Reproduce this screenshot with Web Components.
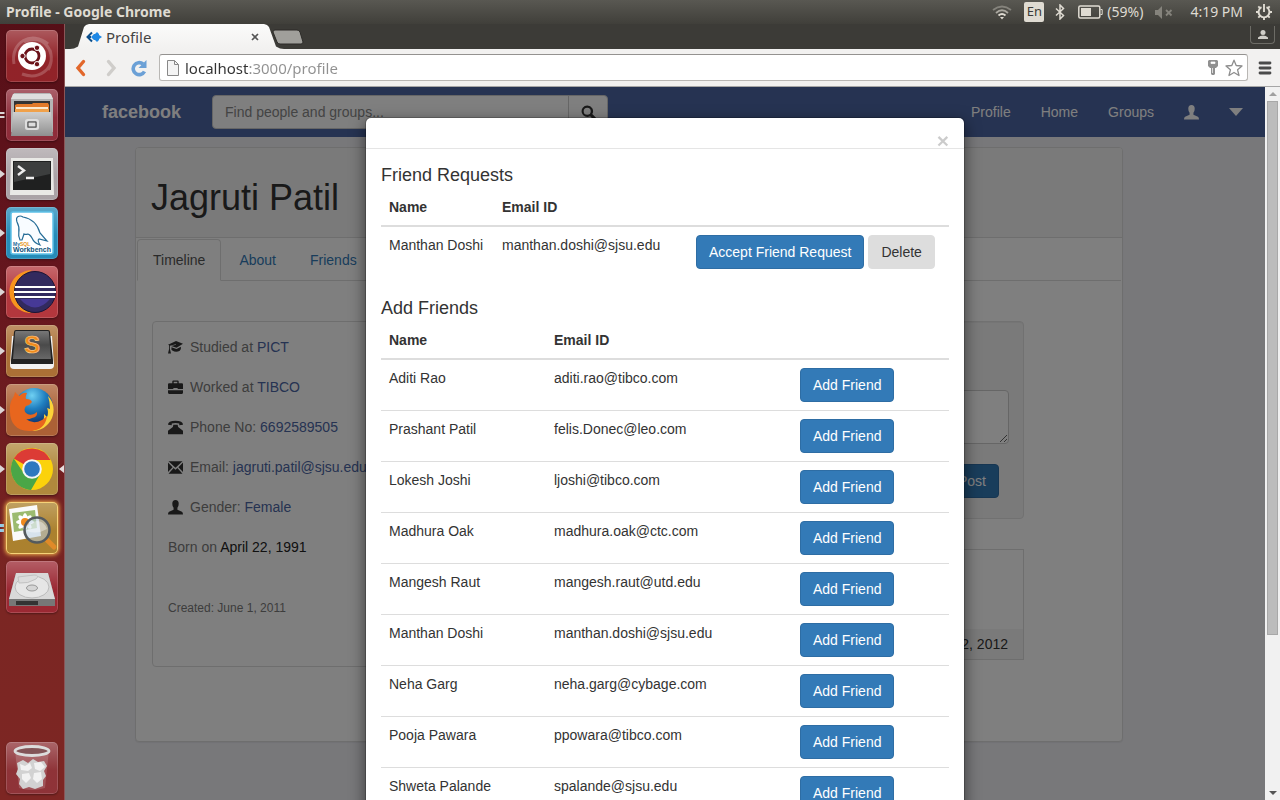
<!DOCTYPE html>
<html lang="en">
<head>
<meta charset="utf-8">
<title>Profile</title>
<style>
  html, body { margin: 0; height: 100%; }
  body { display: flex; flex-direction: column; overflow: hidden; background: #3c3b37; font: 14px/20px "Liberation Sans", Arial, sans-serif; color: #333; }
  .desktop { flex: 1; display: flex; min-height: 0; }
  browser-window { flex: 1; min-width: 0; }
</style>
</head>
<body>
<system-panel></system-panel>
<div class="desktop">
  <app-launcher></app-launcher>
  <browser-window>
    <profile-page></profile-page>
    <modal-dialog slot="overlay">
      <friend-table kind="requests"></friend-table>
      <friend-table kind="suggestions"></friend-table>
    </modal-dialog>
  </browser-window>
</div>
<script>
function define(name, html, init) {
  const template = document.createElement('template');
  template.innerHTML = html;
  customElements.define(name, class extends HTMLElement {
    constructor() {
      super();
      this.attachShadow({ mode: 'open' }).append(template.content.cloneNode(true));
    }
    connectedCallback() { if (init) init.call(this, this.shadowRoot); }
  });
}

/* Desktop panel along the top of the screen */
define('system-panel', `
<style>
  :host { display: flex; align-items: center; justify-content: space-between; height: 24px; padding: 0 8px 0 6px; background: linear-gradient(#595852, #403f3a); color: #dfdbd2; font: 14px/24px "Noto Sans", sans-serif; }
  b { font-weight: 700; }
  .tray { display: flex; align-items: center; }
  .tray > * { display: block; }
  .wifi { margin-right: 12px; }
  .lang { width: 20px; height: 20px; margin-right: 11px; border-radius: 2px; background: #dfdbd2; color: #3c3b37; font-size: 13px; line-height: 19px; text-align: center; }
  .bt { margin-right: 13px; }
  .bat { margin-right: 4px; }
  .vol { margin: 0 17px 0 12px; }
  .clock { margin-right: 13px; }
</style>
<b>Profile - Google Chrome</b>
<div class="tray">
  <svg class="wifi" width="20" height="16" viewBox="0 0 20 16" fill="none" stroke-width="1.800"><path d="M1 6Q10-1 19 6" stroke="#85837c"/><path d="M4 9Q10 3.500 16 9" stroke="#aaa79f"/><path d="M6.500 11.500Q10 8.500 13.500 11.500" stroke="#dfdbd2"/><path d="M8 13L10 15.500 12 13Z" fill="#dfdbd2"/></svg>
  <span class="lang">En</span>
  <svg class="bt" width="10" height="16" viewBox="0 0 10 16" fill="none" stroke="#dfdbd2" stroke-width="1.500"><path d="M1 4.500L8.500 11.500 5 15V1L8.500 4.500 1 11.500"/></svg>
  <svg class="bat" width="25" height="14" viewBox="0 0 25 14"><rect x=".8" y="1" width="21" height="12" rx="1.500" fill="none" stroke="#dfdbd2" stroke-width="1.500"/><path d="M3 3h10v8H3z" fill="#dfdbd2"/><path d="M22.500 4.500h1.700v5h-1.700" fill="none" stroke="#dfdbd2"/></svg>
  <span>(59%)</span>
  <svg class="vol" width="18" height="13" viewBox="0 0 18 13"><path d="M0 4h3l4-4v13l-4-4H0z" fill="#85837c"/><path d="M11 4l5.500 5.500M16.500 4L11 9.500" stroke="#85837c" stroke-width="1.800"/></svg>
  <span class="clock">4:19 PM</span>
  <svg width="16" height="16" viewBox="0 0 16 16" fill="none" stroke="#dfdbd2" stroke-width="1.900"><path d="M5.500 3.200A5.400 5.400 0 1 0 10.500 3.200"/><path d="M8 0v8M0 8h3M13 8h3M8 13v3M2.300 2.300l2 2M13.700 2.300l-2 2M2.300 13.700l2-2M13.700 13.700l-2-2"/></svg>
</div>`);

/* Launcher: column of app tiles; "marks" says which running pips stand beside a tile */
define('launcher-item', `
<style>
  :host { display: grid; grid-template-columns: 6px 52px 6px; align-items: center; height: 52px; }
  .tile { display: block; width: 52px; height: 52px; border-radius: 5px; background: linear-gradient(rgba(255,255,255,.28), rgba(255,255,255,.04) 55%), var(--tile, #a33); box-shadow: inset 0 0 0 1px rgba(255,255,255,.16), 0 1px 2px rgba(0,0,0,.35); }
  :host([focused]) .tile { box-shadow: inset 0 0 0 1px #f6d278, 0 0 4px 1px #f0b04a; }
  ::slotted(svg) { display: block; }
</style>
<svg class="left" width="6" height="10" viewBox="0 0 6 10"></svg>
<span class="tile"><slot></slot></span>
<svg class="right" width="6" height="10" viewBox="0 0 6 10"></svg>`, function (root) {
  const marks = { one: '<path d="M0 1v8L5 5z" fill="#dcd6d6"/>', two: '<path d="M0 2h4l1 1-1 1H0zM0 6h4l1 1-1 1H0z" fill="#dcd6d6"/>', blue: '<path d="M0 1h4v3H0zM0 6h4v3H0z" fill="#8fcdf0"/>' };
  root.querySelector('.left').innerHTML = marks[this.getAttribute('marks')] || '';
  if (this.hasAttribute('current')) root.querySelector('.right').innerHTML = '<path d="M6 1v8L1 5z" fill="#e6dede"/>';
});

define('app-launcher', `
<style>
  :host { display: flex; flex-direction: column; gap: 7px; box-sizing: border-box; width: 65px; padding: 6px 0; background: linear-gradient(#560f17, #64151d 30%, #7b2623 75%, #7d2623); border-right: 1px solid #8b5557; font-family: "Liberation Sans", sans-serif; }
  .trash { margin-top: auto; }
</style>
<launcher-item style="--tile:#8d1a20"><svg width="52" height="52" viewBox="0 0 52 52"><path d="M8 34C4 12 26 0 42 14M44 20C50 40 32 50 16 44M18 12C38 2 52 24 42 40" fill="none" stroke="#fff" stroke-opacity=".2" stroke-width="3"/><circle cx="26" cy="26" r="14" fill="#fff"/><circle cx="26" cy="26" r="7" fill="none" stroke="#6b1219" stroke-width="2.800"/><g fill="#6b1219" stroke="#fff"><circle cx="16.500" cy="26" r="2.700"/><circle cx="31" cy="17.800" r="2.700"/><circle cx="31" cy="34.200" r="2.700"/></g></svg></launcher-item>
<launcher-item marks="two" style="--tile:#8a2432"><svg width="52" height="52" viewBox="0 0 52 52"><defs><linearGradient id="steel" x2="0" y2="1"><stop stop-color="#cfcfcf"/><stop offset="1" stop-color="#8f8f8f"/></linearGradient></defs><path d="M8 4h36l3 6v33H5V10z" fill="#b5b5b5"/><path d="M7 5h38l2 5H5z" fill="#dedede"/><path d="M8 12h36v12H8z" fill="#333"/><path d="M9 16l2-1h15l1-1h15l1 2v8H9z" fill="#e27a2a"/><path d="M10 18h32v5H10z" fill="#fbe9cf"/><path d="M9 20h34v4H9z" fill="#f0a14a"/><path d="M7 23h38l2 24H5z" fill="url(#steel)"/><rect x="20" y="31" width="12" height="9" rx="1.500" fill="none" stroke="#dedede" stroke-width="2"/><path d="M22 33h8v5h-8z" fill="#ddd" stroke="#444"/></svg></launcher-item>
<launcher-item marks="one" style="--tile:#a79fa3"><svg width="52" height="52" viewBox="0 0 52 52"><path d="M5 10h42l1 37H4z" fill="#e9e9e6"/><path d="M7 13h38v29H7z" fill="#1f2020"/><path d="M8 14h36v12L8 34z" fill="#3c3e3e"/><path d="M12 18l6 4.500-6 4.500M20 30h8" fill="none" stroke="#eee" stroke-width="2.400"/></svg></launcher-item>
<launcher-item marks="one" style="--tile:#1d87b5"><svg width="52" height="52" viewBox="0 0 52 52"><rect x="5" y="5" width="42" height="42" rx="2" fill="#fff" stroke="#5fc1e8" stroke-width="1.500"/><path d="M14 33C10 26 16 24 11 15 9 9 14 8 17 10 28 12 32 19 34 26L41 34 33 32Q31 33 34 38 28 36 26 31C22 24 21 29 18 27L16 33z" fill="#f8fcff" stroke="#256c96" stroke-width="1.200"/><text x="7" y="39" font-size="5" font-weight="700" fill="#1b6c9a">My<tspan fill="#e8941a">SQL</tspan></text><text x="7" y="45" font-size="7" font-weight="700" fill="#0b5078">Workbench</text></svg></launcher-item>
<launcher-item marks="one" style="--tile:#b02f35"><svg width="52" height="52" viewBox="0 0 52 52"><path d="M26 4C-4 6-4 46 26 47 8 40 8 12 26 4z" fill="#f7941e"/><circle cx="29" cy="26" r="20.500" fill="#322a5e" stroke="#191433"/><path d="M14 33Q29 50 44 33z" fill="#463996"/><path d="M9 21h40M8 26h42M9 31h40" stroke="#fff" stroke-width="2.200"/></svg></launcher-item>
<launcher-item marks="one" style="--tile:#a86a2e"><svg width="52" height="52" viewBox="0 0 52 52"><defs><linearGradient id="cap" x2="0" y2="1"><stop stop-color="#777"/><stop offset=".5" stop-color="#4a4a4a"/><stop offset="1" stop-color="#686868"/></linearGradient></defs><path d="M6 11L4 40q0 4 4 4h36q4 0 4-4l-2-29z" fill="#f2f2f2"/><path d="M10 5h32q2 0 2 2l3 28v4H5v-4L8 7q0-2 2-2z" fill="#222"/><path d="M10 6h32q1 0 1 2l2 26H7L9 8q0-2 1-2z" fill="url(#cap)"/><text x="18" y="28" font-size="24" font-weight="700" fill="#f08a1c" stroke="#ffd08a" stroke-width=".6">S</text></svg></launcher-item>
<launcher-item marks="one" style="--tile:#a95b2e"><svg width="52" height="52" viewBox="0 0 52 52"><defs><radialGradient id="globe" cx=".45" cy=".2" r=".7"><stop stop-color="#6fd0f2"/><stop offset=".5" stop-color="#1f7fc0"/><stop offset="1" stop-color="#123c78"/></radialGradient></defs><circle cx="28" cy="23" r="19" fill="url(#globe)"/><path d="M42 12c6 6 7 15 4 22-4 9-12 13-20 13 8-4 13-10 12-17l3 3q2-5 0-9l3 1q0-7-2-13z" fill="#fbd238"/><path d="M4 28C3 20 6 15 8 12l1-4 4 4q4-4 8-3-2 4-1 6 5 0 6 3-2 3-6 4-3 4 0 7 3 3 8 1l3-2q1 5-5 6-4 2-6 1 7 6 16 1 2-1 5-4-2 15-18 15C10 47 4 38 4 28z" fill="#e8661e"/></svg></launcher-item>
<launcher-item marks="one" current style="--tile:#ad8435"><svg width="52" height="52" viewBox="0 0 52 52"><circle cx="26" cy="26" r="21" fill="#fbd20b"/><path d="M26 26L7.800 15.500A21 21 0 0 1 44.500 17H26z" fill="#dc3b35"/><path d="M7.800 15.500A21 21 0 0 0 25 47L34.500 30.500 17 29z" fill="#4aa647"/><circle cx="26" cy="26" r="9.800" fill="#f5f5f5"/><circle cx="26" cy="26" r="7.800" fill="#2d78bf"/></svg></launcher-item>
<launcher-item marks="blue" focused style="--tile:#a87c26"><svg width="52" height="52" viewBox="0 0 52 52"><path d="M3 7l28-4 4 31-28 5z" fill="#fafafa"/><path d="M6 11l23-3 2 18-23 4z" fill="#9cbb70"/><g fill="#fff"><ellipse cx="19" cy="20" rx="9" ry="3"/><ellipse cx="19" cy="20" rx="3" ry="9"/><ellipse cx="19" cy="20" rx="9" ry="3" transform="rotate(45 19 20)"/><ellipse cx="19" cy="20" rx="9" ry="3" transform="rotate(-45 19 20)"/></g><circle cx="19" cy="20" r="4" fill="#ee8a1d"/><path d="M41 38l7 7" stroke="#e08a28" stroke-width="5" stroke-linecap="round"/><circle cx="31" cy="28" r="12.500" fill="#b9cfe2" fill-opacity=".55" stroke="#545a5e" stroke-width="2.600"/><path d="M21 29q10 4 20-2-3-8-10-8-8 0-10 10z" fill="#fff" opacity=".4"/></svg></launcher-item>
<launcher-item style="--tile:#97202b"><svg width="52" height="52" viewBox="0 0 52 52"><path d="M10 12h32l7 26v7H3v-7z" fill="#777"/><path d="M10 12h32l7 26H3z" fill="#d9d9d9"/><ellipse cx="26" cy="26" rx="17" ry="11" fill="#e6e6e6" stroke="#bbb"/><path d="M12 16l16-2q6 0 2 4-8 5-17 4z" fill="#dcdcdc" stroke="#c2c2c2"/><ellipse cx="26" cy="27" rx="5.500" ry="3" fill="#d5d5d5" stroke="#999"/><path d="M10 40h22v4H10z" fill="#333"/></svg></launcher-item>
<launcher-item class="trash" style="--tile:#8a2b30"><svg width="52" height="52" viewBox="0 0 52 52"><path d="M9 8h34l-4 38q-13 4-26 0z" fill="#fff" fill-opacity=".16"/><path d="M11 21l6-3 5 3 5-4 5 3 6-1 3 5-3 5 2 5-3 4v6l-8 3-6-2-6 2-4-5 1-5-4-5 2-5z" fill="#d2d2d2"/><path d="M14 22l5 2 5-3 2 5-4 3-7-1zM28 21l7-1 4 5-5 4-5-2zM16 32l7-1 2 5-5 5-4-4zM28 31l7-1 1 7-5 4-4-4z" fill="#f2f2f2"/><ellipse cx="26" cy="9" rx="17" ry="4.500" fill="#835457" stroke="#dcdcdc" stroke-width="2.800"/></svg></launcher-item>`);

/* Browser chrome round the page */
define('browser-window', `
<style>
  :host { display: flex; flex-direction: column; }
  .tabs { display: flex; height: 25px; background: #3c3b37; font: 15px/24px "Noto Sans", sans-serif; }
  .tab { box-sizing: border-box; display: flex; align-items: center; flex: none; width: 214px; height: 25px; padding: 0 25px 0 16px; background: linear-gradient(#fbfbfa, #f2f1f0); clip-path: polygon(0 100%, 4px 98%, 8px 90%, 14px 12%, 16px 4%, 19px 0, 194px 0, 197px 4%, 199px 12%, 206px 90%, 210px 98%, 100% 100%); color: #444; margin-left: 5px; }
  .tab .name { margin: 0 auto 0 4px; }
  .tab button { padding: 0; border: 0; background: none; display: flex; }
  .newtab { padding: 0; border: 0; background: none; display: flex; margin: 5px auto 0 -12px; height: 16px; }
  .person { box-sizing: border-box; width: 25px; height: 18px; margin: 2px 5px 0 0; padding: 0; border: 1px solid #6d6c66; border-top: 0; border-radius: 0 0 4px 4px; background: #3c3b37; display: flex; justify-content: center; align-items: center; }
  .tools { box-sizing: border-box; display: flex; align-items: center; height: 38px; padding: 0 8px 0 10px; background: #f2f1f0; border-bottom: 1px solid #a6a6a6; }
  .tools button { padding: 0; border: 0; background: none; display: flex; flex: none; }
  .back { margin-right: 18px; } .fwd { margin-right: 13px; } .reload { margin-right: 11px; }
  .omni { box-sizing: border-box; display: flex; align-items: center; flex: 1; height: 27px; padding: 0 4px 0 7px; border: 1px solid #b9b7b4; border-top-color: #949290; border-radius: 3px; background: #fff; margin-right: 10px; }
  .omni input { flex: 1; min-width: 0; height: 24px; padding: 0; margin: 0 0 0 6px; border: 0; outline: 0; font: 15px/24px "Noto Sans", sans-serif; background: linear-gradient(90deg, #333 64px, #909090 64px); -webkit-background-clip: text; background-clip: text; color: transparent; }
  .omni .key { margin-right: 7px; }
  .main { flex: 1; display: flex; min-height: 0; }
  .view { flex: 1; min-width: 0; position: relative; overflow: hidden; background: #f0f0f5; }
  .veil { position: absolute; inset: 0; background: rgba(0,0,0,.5); display: flex; justify-content: center; align-items: flex-start; overflow: hidden; }
  .bar { width: 15px; flex: none; display: flex; flex-direction: column; align-items: center; background: #f1f1f1; }
  .bar svg { flex: none; margin: 5px 0; }
  .track { flex: 1; width: 11px; }
  .thumb { box-sizing: border-box; height: 78%; background: #bcbcbc; border: 1px solid #a8a8a8; }
</style>
<div class="tabs">
  <div class="tab">
    <svg width="16" height="12" viewBox="0 0 16 12"><path d="M6 1.500L1.500 6 6 10.500M1 6h4" fill="none" stroke="#0d4f8b" stroke-width="2"/><path d="M5 6l3-3h1l2-2 2 2v1l3 2-3 2v1l-2 2-2-2H8z" fill="#1e88e5"/></svg>
    <span class="name">Profile</span>
    <button aria-label="Close tab"><svg width="8" height="8" viewBox="0 0 8 8" stroke="#555" stroke-width="1.700"><path d="M1 1l6 6M7 1L1 7"/></svg></button>
  </div>
  <button class="newtab" aria-label="New tab"><svg width="32" height="16" viewBox="0 0 32 16"><path d="M3 1h22q2 0 3 2l3 10q0 2-2 2H8q-2 0-3-2L1 3q0-2 2-2z" fill="#a09f9b" stroke="#2c2b28"/></svg></button>
  <button class="person" aria-label="User"><svg width="10" height="9" viewBox="0 0 10 9" fill="#d0cec8"><circle cx="5" cy="2.500" r="2.500"/><path d="M0 9V7.500Q2 5.500 5 5.500t5 2V9z"/></svg></button>
</div>
<div class="tools">
  <button class="back" aria-label="Back"><svg width="12" height="18" viewBox="0 0 12 18"><path d="M8.500 2.500L3 9l5.500 6.500" fill="none" stroke="#e2672b" stroke-width="3.400" stroke-linecap="round"/></svg></button>
  <button class="fwd" aria-label="Forward"><svg width="12" height="18" viewBox="0 0 12 18"><path d="M3.500 2.500L9 9l-5.500 6.500" fill="none" stroke="#cfcdca" stroke-width="3.400" stroke-linecap="round"/></svg></button>
  <button class="reload" aria-label="Reload"><svg width="18" height="18" viewBox="0 0 18 18"><path d="M13 5A6 6 0 1 0 14.500 12.500" fill="none" stroke="#6ba0d6" stroke-width="3.600"/><path d="M16.500 1v8H8.500z" fill="#6ba0d6"/></svg></button>
  <div class="omni">
    <svg width="12" height="16" viewBox="0 0 12 16"><path d="M.5 .5h7l4 4v11H.5z" fill="#f4f4f4" stroke="#888"/><path d="M7.500 .5v4h4" fill="none" stroke="#888"/></svg>
    <input type="text" aria-label="Address" value="localhost:3000/profile">
    <svg class="key" width="10" height="15" viewBox="0 0 10 15"><path d="M1 0h8l1 1v5L8 8H7v6l-1 1H4l-1-1V8H2L0 6V1z" fill="#909090"/><path d="M3 2h4v1.500H3zM4.500 8v5" fill="#fff" stroke="#fff" stroke-width=".7"/></svg>
    <svg width="18" height="18" viewBox="0 0 18 18"><path d="M9 1.200l2.200 5.300 5.800.5-4.400 3.800 1.400 5.700L9 13.500l-5 3 1.400-5.700L1 7l5.800-.5z" fill="#fff" stroke="#8d8d8d" stroke-width="1.300" stroke-linejoin="round"/></svg>
  </div>
  <button aria-label="Menu"><svg width="14" height="14" viewBox="0 0 14 14" stroke="#4a4a4a" stroke-width="2.800" stroke-linecap="round"><path d="M2 2h10M2 7h10M2 12h10"/></svg></button>
</div>
<div class="main">
  <div class="view"><slot></slot><div class="veil"><slot name="overlay"></slot></div></div>
  <div class="bar">
    <svg width="8" height="4" viewBox="0 0 8 4"><path d="M0 4l4-4 4 4z" fill="#a0a0a0"/></svg>
    <div class="track"><div class="thumb"></div></div>
    <svg width="8" height="4" viewBox="0 0 8 4"><path d="M0 0l4 4 4-4z" fill="#555"/></svg>
  </div>
</div>`);

define('glyph-icon', `<style>:host { display: inline-block; width: 15px; height: 15px; } svg { display: block; width: 100%; height: 100%; }</style><svg viewBox="0 0 14 14" fill="currentColor"></svg>`, function (root) {
  const shapes = {
    education: '<path d="M0 4.500L7.500 1 14 3.500 8 7.200 3 5.600 7.500 4.500 7.300 4 1.800 5.400V8.500L2.800 12.500H0L1 8.500V5z"/><path d="M3.200 6.800L8 8.500 12 6.200V8.500L11 10Q7.500 12 4 9.800L3.200 9z"/>',
    briefcase: '<path d="M4 3V1.500Q4 .5 5 .5h4q1 0 1 1V3h3q1 0 1 1v4.500H9V7.500H5v1H0V4q0-1 1-1zM5.300 3h3.400V1.700H5.300zM0 9.500h14V12q0 1-1 1H1q-1 0-1-1z" fill-rule="evenodd"/>',
    phone: '<path d="M0 4.500Q0 .8 7 .8t7 3.700L10.500 5V3.300Q7 2.300 3.500 3.300V5z"/><path d="M5 4.500h4l.5 2L14 10v3.200H0V10l4.500-3.500z"/>',
    envelope: '<path d="M.5 1.200h13L7 7.200zM0 2.400l4.300 4.300L0 11.200zM14 2.400L9.700 6.700 14 11.200zM5.200 7.500L7 9.100l1.800-1.600 4.700 5.300H.5z"/>',
    user: '<path d="M7 0q3 0 3 3.500Q10 6 8.800 7.200V9L13 11q1 .5 1 2.500H0Q0 11.500 1 11L5.200 9V7.200Q4 6 4 3.500 4 0 7 0z"/>',
    search: '<path d="M5.800.5a5.300 5.300 0 1 0 2.700 9.900L12 14l2-2-3.500-3.500A5.300 5.300 0 0 0 5.800.5zm0 2a3.300 3.300 0 1 1 0 6.600 3.300 3.300 0 0 1 0-6.600z"/>'
  };
  root.querySelector('svg').innerHTML = shapes[this.getAttribute('name')];
});

define('site-navbar', `
<style>
  :host { display: flex; align-items: center; height: 50px; padding: 0 22px 0 37px; background: #4c66a4; }
  a { color: #fff; text-decoration: none; }
  .brand { font-size: 18px; font-weight: 700; margin-right: 31px; }
  form { display: flex; width: 396px; margin: 0; }
  input, form button { box-sizing: border-box; height: 34px; border: 1px solid #ccc; background: #fff; font: inherit; }
  input { flex: 1; min-width: 0; padding: 6px 12px; border-radius: 4px 0 0 4px; }
  input::placeholder { color: #888; opacity: 1; }
  form button { width: 40px; margin-left: -1px; padding: 0; border-radius: 0 4px 4px 0; color: #333; display: flex; align-items: center; justify-content: center; }
  nav { display: flex; align-items: center; gap: 30px; margin-left: auto; }
  nav a { display: flex; }
</style>
<a class="brand" href="#">facebook</a>
<form><input type="text" aria-label="Search" placeholder="Find people and groups..."><button type="button" aria-label="Search"><glyph-icon name="search"></glyph-icon></button></form>
<nav><a href="#">Profile</a><a href="#">Home</a><a href="#">Groups</a><a href="#" aria-label="Account"><glyph-icon name="user"></glyph-icon></a><a href="#" aria-label="More"><svg width="14" height="8" viewBox="0 0 14 8"><path d="M0 0h14L7 8z" fill="#fff"/></svg></a></nav>`);

define('profile-page', `
<style>
  :host { display: block; }
  .card { box-sizing: border-box; margin: 10px 142px 0 70px; min-height: 595px; background: #fff; border: 1px solid #ddd; border-radius: 4px; box-shadow: 0 1px 1px rgba(0,0,0,.05); }
  header { box-sizing: border-box; height: 90px; padding: 30px 15px 0; background: #f5f5f5; border-bottom: 1px solid #ddd; border-radius: 3px 3px 0 0; }
  h1 { margin: 0; font-size: 36px; line-height: 40px; font-weight: 500; }
  .tabs { display: flex; gap: 2px; margin: 1px 1px 0; border-bottom: 1px solid #ddd; }
  .tabs a { padding: 10px 15px; border: 1px solid transparent; margin-bottom: -1px; border-radius: 4px 4px 0 0; color: #337ab7; text-decoration: none; }
  .tabs a.on { color: #555; background: #fff; border-color: #ddd #ddd #fff; }
  .cols { display: grid; grid-template-columns: 1fr 2fr; gap: 16px; align-items: start; margin: 40px 98px 0 16px; }
  .about { box-sizing: border-box; min-height: 346px; padding: 15px; border: 1px solid #ddd; border-radius: 4px; display: flex; flex-direction: column; gap: 20px; color: #7a7a7a; }
  .about div { display: flex; align-items: center; gap: 7px; white-space: nowrap; }
  .about glyph-icon { color: #333; }
  .about a { color: #4c66a4; text-decoration: none; }
  .about b { font-weight: 400; color: #222; }
  small { font-size: 12px; margin-top: 21px; }
  .side { display: flex; flex-direction: column; gap: 30px; }
  .well { display: flex; flex-direction: column; align-items: flex-end; gap: 20px; padding: 68px 14px 20px; background: #f5f5f5; border: 1px solid #e3e3e3; border-radius: 4px; box-shadow: inset 0 1px 1px rgba(0,0,0,.05); }
  textarea { box-sizing: border-box; display: block; width: 100%; height: 54px; border: 1px solid #ccc; border-radius: 4px; background: #fff; }
  .well button { height: 34px; margin-right: 10px; padding: 0 12px; border: 1px solid #2e6da4; border-radius: 4px; background: #337ab7; color: #fff; font: inherit; }
  .post { border: 1px solid #ddd; padding-top: 79px; }
  .post footer { padding: 5px 15px; background: #f5f5f5; text-align: right; }
</style>
<site-navbar></site-navbar>
<main class="card">
  <header><h1>Jagruti Patil</h1></header>
  <nav class="tabs"><a class="on" href="#">Timeline</a><a href="#">About</a><a href="#">Friends</a></nav>
  <div class="cols">
    <section class="about">
      <div><glyph-icon name="education"></glyph-icon><span>Studied at <a href="#">PICT</a></span></div>
      <div><glyph-icon name="briefcase"></glyph-icon><span>Worked at <a href="#">TIBCO</a></span></div>
      <div><glyph-icon name="phone"></glyph-icon><span>Phone No: <a href="#">6692589505</a></span></div>
      <div><glyph-icon name="envelope"></glyph-icon><span>Email: <a href="#">jagruti.patil@sjsu.edu</a></span></div>
      <div><glyph-icon name="user"></glyph-icon><span>Gender: <a href="#">Female</a></span></div>
      <div><span>Born on <b>April 22, 1991</b></span></div>
      <small>Created: June 1, 2011</small>
    </section>
    <div class="side">
      <section class="well"><textarea aria-label="New post"></textarea><button type="button">Post</button></section>
      <article class="post"><footer>2, 2012</footer></article>
    </div>
  </div>
</main>`);

define('modal-dialog', `
<style>
  :host { display: block; box-sizing: border-box; width: 600px; max-width: 100%; margin-top: 30px; background: #fff; background-clip: padding-box; border: 1px solid rgba(0,0,0,.2); border-radius: 6px; box-shadow: 0 5px 15px rgba(0,0,0,.5); }
  header { display: flex; justify-content: flex-end; padding: 14px 15px 0; border-bottom: 1px solid #e5e5e5; }
  button { height: 16px; padding: 0; border: 0; background: none; font: 700 21px/18px "Liberation Sans", Arial, sans-serif; color: #000; opacity: .2; }
  .body { display: flex; flex-direction: column; gap: 20px; padding: 15px; }
</style>
<header><button type="button" aria-label="Close">×</button></header>
<div class="body"><slot></slot></div>`);

/* One titled table: incoming requests, or people to add */
define('friend-table', `
<style>
  :host { display: block; }
  h4 { margin: 0 0 3px; font-size: 18px; line-height: 22px; font-weight: 500; }
  table { width: 100%; table-layout: fixed; border-collapse: separate; border-spacing: 0; }
  th, td { padding: 8px; text-align: left; vertical-align: top; white-space: nowrap; }
  th { border-bottom: 2px solid #ddd; }
  tr + tr td { border-top: 1px solid #ddd; }
  td:last-child { display: flex; gap: 4px; }
  button { height: 34px; padding: 0 12px; border: 1px solid #2e6da4; border-radius: 4px; background: #337ab7; color: #fff; font: inherit; }
  button.plain { border-color: #ddd; background: #ddd; color: #333; }
</style>
<h4></h4>
<table><colgroup><col><col><col></colgroup><thead><tr><th>Name</th><th>Email ID</th><th></th></tr></thead><tbody></tbody></table>`, function (root) {
  const data = {
    requests: { title: 'Friend Requests', widths: [113, 194], rows: [['Manthan Doshi', 'manthan.doshi@sjsu.edu']],
      actions: '<button type="button">Accept Friend Request</button><button type="button" class="plain">Delete</button>' },
    suggestions: { title: 'Add Friends', widths: [165, 246], rows: [
      ['Aditi Rao', 'aditi.rao@tibco.com'], ['Prashant Patil', 'felis.Donec@leo.com'], ['Lokesh Joshi', 'ljoshi@tibco.com'],
      ['Madhura Oak', 'madhura.oak@ctc.com'], ['Mangesh Raut', 'mangesh.raut@utd.edu'], ['Manthan Doshi', 'manthan.doshi@sjsu.edu'],
      ['Neha Garg', 'neha.garg@cybage.com'], ['Pooja Pawara', 'ppowara@tibco.com'], ['Shweta Palande', 'spalande@sjsu.edu']],
      actions: '<button type="button">Add Friend</button>' }
  }[this.getAttribute('kind')];
  root.querySelector('h4').textContent = data.title;
  root.querySelectorAll('col').forEach((col, i) => { if (data.widths[i]) col.style.width = data.widths[i] + 'px'; });
  root.querySelector('tbody').innerHTML = data.rows.map(([name, mail]) => `<tr><td>${name}</td><td>${mail}</td><td>${data.actions}</td></tr>`).join('');
});
</script>
</body>
</html>
